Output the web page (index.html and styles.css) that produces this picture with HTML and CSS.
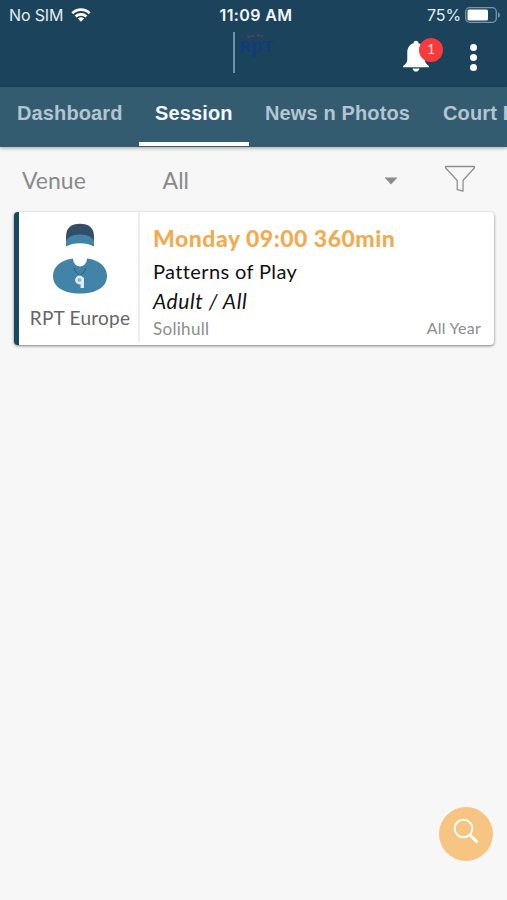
FILE: index.html
```html
<!DOCTYPE html>
<html lang="en">
<head>
<meta charset="utf-8">
<title>Sessions</title>
<link rel="stylesheet" href="styles.css">
</head>
<body>
<header class="top">
  <div class="status">
    <div class="carrier"><span>No SIM</span>
      <svg class="wifi" width="20" height="14" viewBox="0 0 20 14" fill="none" stroke="#fff" stroke-width="2.7"><path d="M1.3 5.2C6.2.5 13.8.5 18.7 5.2M4.6 8.5c3.1-2.8 7.7-2.8 10.8 0"/><path d="M6.8 10.5c1.8-1.6 4.6-1.6 6.4 0L10 13.8z" fill="#fff" stroke="none"/></svg>
    </div>
    <div class="time">11:09 AM</div>
    <div class="power"><span>75%</span>
      <svg width="36" height="16" viewBox="0 0 36 16"><rect x=".7" y=".7" width="30.6" height="14.6" rx="4" fill="none" stroke="#7896a7" stroke-width="1.3"/><rect x="2.5" y="2.500" width="20.500" height="11" rx="1.500" fill="#fff"/><path d="M33 5.200c2.600 1 2.600 4.600 0 5.600z" fill="#7896a7"/></svg>
    </div>
  </div>
  <div class="appbar">
    <div class="brand"><div class="rule"></div><div class="logo">
      <svg class="tag" width="18" height="4" viewBox="0 0 18 4" fill="none" stroke="#713a50" stroke-width="1.600"><path d="M1 2.500h3M5 2h3M11 1.500h3M15 2h2"/></svg>
      <span class="name">R<span class="p">p</span>T</span></div></div>
    <div class="actions">
      <div class="bell">
        <svg width="28" height="32" viewBox="0 0 28 32" fill="#fff"><path d="M14 .8c1.500 0 2.400 1 2.400 2.500 4 1.200 6.300 4.600 6.300 9.200v6.800c0 3 1.400 4.600 4.300 6.600v1.400H1v-1.400c2.900-2 4.300-3.600 4.300-6.600v-6.800c0-4.600 2.300-8 6.300-9.200C11.600 1.800 12.500.8 14 .8zM10.500 28.400h7c-.5 2-1.800 3.100-3.500 3.100s-3-1.100-3.500-3.100z"/></svg>
        <span class="badge">1</span>
      </div>
      <div class="more"><i></i><i></i><i></i></div>
    </div>
  </div>
</header>
<nav class="tabs">
  <a class="tab dash">Dashboard</a>
  <a class="tab active">Session</a>
  <a class="tab news">News n Photos</a>
  <a class="tab court">Court Booking</a>
</nav>
<main>
  <div class="filter">
    <span class="label">Venue</span>
    <span class="value">All</span>
    <svg class="caret" width="14" height="8" viewBox="0 0 14 8"><path d="M.5.5h13L7 7.500z" fill="#8c8c8c"/></svg>
    <svg class="funnel" width="32" height="28" viewBox="0 0 32 28" fill="none" stroke="#8f8f8f" stroke-width="1.300" stroke-linejoin="round"><path d="M1.500 1.500h29v1.200L19 15.500v10.700l-5.800-1.500v-9.200L1.500 2.700z"/></svg>
  </div>
  <article class="card">
    <div class="coach">
      <svg width="54" height="71" viewBox="0 0 54 71">
        <path d="M20 35.500C8 37 0 43.500 0 53c0 10 9 17.500 27 17.500S54 63 54 53c0-9.500-8-16-20-17.500C33.500 46 20.500 46 20 35.500z" fill="#4283a8"/>
        <path d="M13 18v-4C13 5 18 .8 27 .8S41 5 41 14v4z" fill="#344d68"/>
        <path d="M13 23.500v-5C14 14.500 19 11.500 27 11.500s13 3 14 7v5c-7-4.500-21-4.500-28 0z" fill="#4283a8"/>
        <path d="M21 45c1.500 4 3.500 6 6 7.500 2.500-1.500 4.500-3.500 6-7.500" fill="none" stroke="#2f5879"/>
        <circle cx="26.500" cy="57" r="4.400" fill="#dceaf2"/><path d="M27 54.500h4V65h-3.500v-5z" fill="#dceaf2"/><circle cx="26.500" cy="57" r="1.800" fill="#86b2ca"/>
      </svg>
      <span class="org">RPT Europe</span>
    </div>
    <div class="details">
      <div class="line when">Monday 09:00 360min</div>
      <div class="line what">Patterns of Play</div>
      <div class="line who">Adult / All</div>
      <div class="line foot"><span class="place">Solihull</span><span class="season">All Year</span></div>
    </div>
  </article>
</main>
<div class="fab"><svg width="27" height="27" viewBox="0 0 27 27" fill="none" stroke="#fff"><circle cx="10.500" cy="10.500" r="8.800" stroke-width="1.900"/><path d="M16.800 16.800l7.700 7.700" stroke-width="3"/></svg></div>
</body>
</html>
```
FILE: styles.css
```css
* { box-sizing: border-box; }
body { margin: 0; height: 900px; overflow: hidden; background: #f7f7f7; font-family: Lato, sans-serif; position: relative; }
svg { display: block; flex: none; }
.top { height: 87px; background: #1b445c; color: #e4edf3; }
.status { height: 30px; display: grid; grid-template-columns: 1fr auto 1fr; align-items: center; padding: 0 6px 0 9px; font: 16px/30px Inter, sans-serif; }
.carrier, .power { display: flex; align-items: center; gap: 8px; letter-spacing: -.15px; }
.power { justify-content: flex-end; gap: 4px; }
.time { font-weight: 600; color: #f2f7fa; letter-spacing: .4px; padding-left: 2px; }
.appbar { height: 57px; display: flex; justify-content: space-between; padding: 0 30px 0 233px; }
.brand { display: flex; gap: 4px; padding-top: 2px; }
.rule { width: 2px; height: 41px; background: #6f93a6; }
.logo { display: flex; flex-direction: column; padding-top: 2px; }
.tag { margin-left: 7px; }
.name { display: flex; align-items: baseline; margin-top: -3px; font: bold 17px/20px "Liberation Serif", serif; color: #123b7b; }
.p { font-size: 20px; }
.actions { display: flex; }
.bell { position: relative; width: 28px; margin: 10px 40px 0 0; }
.badge { position: absolute; left: 17px; top: -2px; width: 24px; height: 24px; border-radius: 50%; background: #f93a3d; color: #f6dede; font-size: 14px; line-height: 22px; text-align: center; }
.more { display: flex; flex-direction: column; gap: 3px; padding-top: 14px; }
.more i { width: 7px; height: 7px; border-radius: 50%; background: #fff; }
.tabs { height: 60px; display: flex; background: #335c70; overflow: hidden; position: relative; box-shadow: 0 1px 4px rgba(0,0,0,.35); white-space: nowrap; }
.tab { flex: none; height: 59px; padding: 0 16px; font: bold 20px/52px "Liberation Sans", sans-serif; letter-spacing: .13px; color: #b3c5d0; }
.dash { width: 139px; padding-left: 17px; }
.active { width: 110px; color: #f2f8fb; border-bottom: 4px solid #fff; }
.news { width: 178px; }
.filter { height: 64px; display: flex; align-items: center; padding: 2px 31px 0 22px; font-size: 23px; color: #8a8a8a; }
.label { width: 141px; }
.value { width: 222px; }
.caret { margin-top: 2px; }
.funnel { margin-left: 46px; margin-top: -2px; }
.card { width: 480px; height: 133px; margin: 1px 0 0 14px; display: flex; background: #fff; border-left: 5px solid #164961; border-radius: 4px; box-shadow: 0 1px 3px rgba(0,0,0,.5); }
.coach { width: 121px; border-right: 2px solid #eee; margin-bottom: 3px; padding: 11px 0 0 3px; display: flex; flex-direction: column; align-items: center; }
.org { font-size: 19px; line-height: 24px; margin-top: 12px; letter-spacing: .25px; color: #666; white-space: nowrap; }
.details { flex: 1; padding: 11px 13px 0; white-space: nowrap; }
.line { height: 30px; line-height: 30px; }
.when { font-size: 23px; font-weight: 900; letter-spacing: .5px; color: #f1ac52; height: 33px; }
.what { font-size: 20px; letter-spacing: .38px; color: #111; }
.who { font-size: 21px; letter-spacing: .55px; font-style: italic; color: #111; }
.foot { display: flex; justify-content: space-between; height: 26px; line-height: 26px; font-size: 17px; color: #8d8d8d; }
.place { letter-spacing: .3px; }
.season { font-size: 16px; line-height: 24px; letter-spacing: .25px; }
.fab { position: absolute; left: 439px; top: 807px; width: 54px; height: 54px; border-radius: 50%; background: #f6c581; padding: 11px 0 0 14px; }
```
